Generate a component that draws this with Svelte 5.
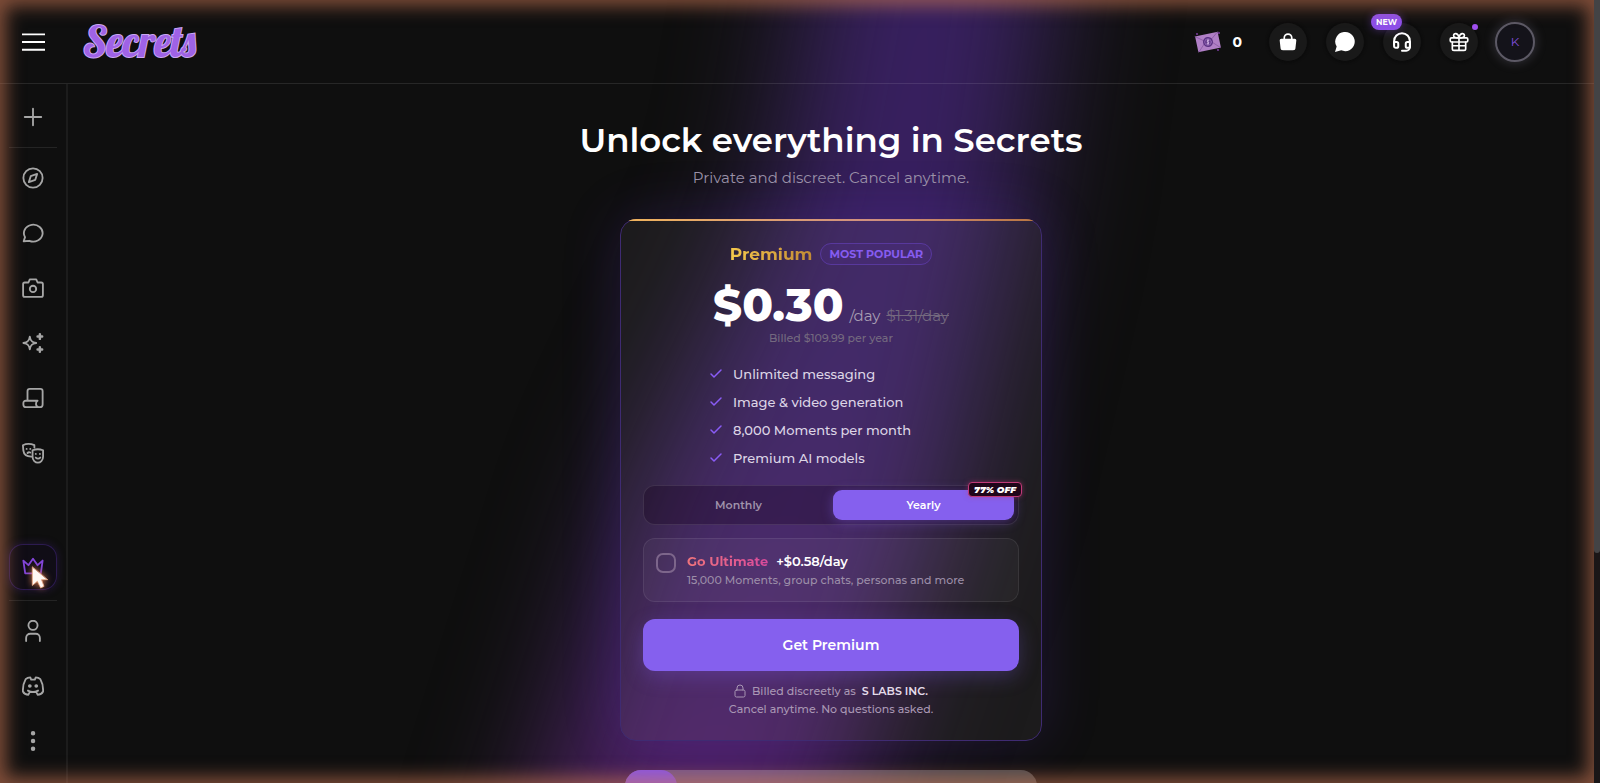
<script lang="ts">
  let billing = $state("yearly");
  let ultimate = $state(false);

  const features = [
    "Unlimited messaging",
    "Image & video generation",
    "8,000 Moments per month",
    "Premium AI models",
  ];

  const links = ["Explore", "Chats", "Gallery", "Create", "Stories", "Characters"];
</script>

{#snippet navIcon(name)}
  <svg class="icon" viewBox="0 0 24 24" aria-hidden="true">
    {#if name === "New"}
      <path d="M12 3v18M3 12h18" />
    {:else if name === "Explore"}
      <circle cx="12" cy="12" r="10.500" />
      <path d="M16.500 7.500 14.500 14l-7 2.500L9.500 10z" />
    {:else if name === "Chats"}
      <path d="M1.800 21 3.300 16.500A10.200 9.200 0 1 1 8 20.500z" />
    {:else if name === "Gallery"}
      <path d="M3 6h4l1.500-3.500h7L17 6h4a1.800 1.800 0 0 1 1.800 1.800v12a1.800 1.800 0 0 1-1.800 1.800H3a1.800 1.800 0 0 1-1.800-1.800v-12A1.800 1.800 0 0 1 3 6z" />
      <circle cx="12" cy="13" r="3.500" />
    {:else if name === "Create"}
      <path d="M8.500 5c.7 4.700 2.300 6.300 7 7-4.700.7-6.300 2.300-7 7-.7-4.700-2.300-6.300-7-7 4.700-.7 6.300-2.300 7-7z" />
      <path d="M19.500 2.500v5M17 5h5M19.500 16.500v5M17 19h5" stroke-width="2.700" />
    {:else if name === "Stories"}
      <path d="M6 14V4.500A2.500 2.500 0 0 1 8.500 2H20a2.500 2.500 0 0 1 2.500 2.500V19a3 3 0 0 1-3 3H4.500a3 3 0 0 1-3-3v-1.500A2.500 2.500 0 0 1 4 15h13c-2.500 1.500-2.500 6 1 7" />
    {:else if name === "Characters"}
      <path d="M10 16c-5 0-8-2.500-8.500-6.500L1 3.500C5 1.500 9 1.500 13.500 3.500V6" />
      <path d="M11.500 9c4-1.500 7.500-1.500 11.500 0v7c0 4-3 6.500-5.700 6.500S11.500 20 11.500 16z" />
      <path d="M5 7.500h.1M9 7.500h.1M6 12c1-1 2-1 3-.5M15 13h.1M19.500 13h.1M15 17c1.500 1.500 3.500 1.500 5 0" />
    {:else if name === "Profile"}
      <circle cx="12" cy="5.800" r="5" />
      <path d="M4.500 23v-3.500A4.500 4.500 0 0 1 9 15h6a4.500 4.500 0 0 1 4.500 4.500V23" />
    {:else if name === "Discord"}
      <path d="M8.500 18.500 7 21.500C4.500 21.500 2 20 1 18 .8 12.500 2 8 4 4.500 5.500 3 7 2.500 9 2.500L10 5h4l1-2.500c2 0 3.500.5 5 2C22 8 23.200 12.500 23 18c-1 2-3.500 3.500-6 3.500l-1.500-3M6.500 17c3.500 2 7.500 2 11 0" />
      <path d="M8.500 12h.1M15.500 12h.1" stroke-width="4" />
    {:else if name === "More"}
      <path d="M12 3.500h.1M12 12h.1M12 20.500h.1" stroke-width="4.800" />
    {:else if name === "Premium"}
      <path d="M1.500 5 7 10l5-7 5 7 5.500-5-2 14h-17z" />
    {/if}
  </svg>
{/snippet}

<div class="app">
  <!-- Slanted light beam behind the whole page -->
  <svg class="beam" viewBox="0 0 1600 783" preserveAspectRatio="none" aria-hidden="true">
    <defs>
      <linearGradient id="beam-fill" x1="0" y1="0" x2="0" y2="1">
        <stop offset="0" stop-color="#37205f" />
        <stop offset="0.5" stop-color="#391f62" />
        <stop offset="0.75" stop-color="#441f62" />
        <stop offset="1" stop-color="#571f62" />
      </linearGradient>
      <filter id="beam-blur" x="-60%" y="-20%" width="220%" height="140%" color-interpolation-filters="sRGB">
        <feGaussianBlur stdDeviation="60" />
      </filter>
    </defs>
    <path d="M850-200h220L1015 200 945 500 780 980H490L640 500 780 200z" fill="url(#beam-fill)" filter="url(#beam-blur)" />
  </svg>

  <header class="topbar">
    <button class="plain burger" aria-label="Toggle menu">
      <svg viewBox="0 0 24 20" aria-hidden="true"><path d="M0 2h24M0 10h24M0 18h24" /></svg>
    </button>
    <a class="logo" href="#home">Secrets</a>

    <div class="actions">
      <a class="balance" href="#moments">
        <svg class="ticket" viewBox="0 0 28 24" aria-hidden="true">
          <g transform="rotate(-12 14 12)">
            <rect x="2.500" y="4" width="23" height="16" rx="1" fill="#b07fc6" />
            <path d="m2.500 4 11.500 9L25.500 4M3 20l7-7m15 7-7-7" fill="none" stroke="#8a5aa5" stroke-width="0.8" />
            <circle cx="14" cy="12" r="5" fill="#5a3182" />
          </g>
          <circle cx="14" cy="12" r="3.300" fill="none" stroke="#9d6fc0" stroke-width="0.8" />
          <path d="M15 10.500c-2-1-3 1-1 1.500s1 2.500-1 1.500M14 9.500v5" fill="none" stroke="#e5c6f4" stroke-width="0.8" />
          <circle cx="3" cy="4" r="1" fill="#7b3d9f" />
          <circle cx="25" cy="3" r="1" fill="#7b3d9f" />
          <circle cx="24" cy="20" r="1" fill="#7b3d9f" />
        </svg>
        0
      </a>
      <button class="plain round" aria-label="Shop">
        <svg viewBox="0 0 24 24" aria-hidden="true">
          <path class="solid" d="M4 8h16a2 2 0 0 1 2 2l-1 9a3 3 0 0 1-3 3H6a3 3 0 0 1-3-3l-1-9a2 2 0 0 1 2-2z" />
          <path d="M7.500 9V7a4.500 4.500 0 0 1 9 0v2" />
        </svg>
      </button>
      <button class="plain round" aria-label="Messages">
        <svg viewBox="0 0 24 24" aria-hidden="true">
          <path class="solid" d="M12.500 0a11.500 11.500 0 1 1-5 22L0 24l2-6.500A11.500 11.500 0 0 1 12.500 0z" />
        </svg>
      </button>
      <button class="plain round" aria-label="Support">
        <svg viewBox="0 0 24 24" aria-hidden="true">
          <path d="M2.500 15v-4a9.500 9.500 0 0 1 19 0v7a4.500 4.500 0 0 1-4.500 4.500H12" stroke-width="2.400" />
          <path d="M2.500 12h3a2 2 0 0 1 2 2v3a2 2 0 0 1-2 2h-1a2 2 0 0 1-2-2zM21.500 12h-3a2 2 0 0 0-2 2v3a2 2 0 0 0 2 2h1a2 2 0 0 0 2-2z" stroke-width="2.400" />
        </svg>
        <span class="new">NEW</span>
      </button>
      <button class="plain round" aria-label="Rewards">
        <svg viewBox="0 0 24 24" aria-hidden="true">
          <rect x="1.500" y="7" width="21" height="5" rx="1.500" />
          <path d="M4 12v8a2 2 0 0 0 2 2h12a2 2 0 0 0 2-2v-8M12 7v15M4 16.500h16M12 7C10 7 5.500 7 5.500 4.200 5.500 1 11 .5 12 7c1-6.500 6.500-6 6.500-2.800C18.500 7 14 7 12 7z" />
        </svg>
        <span class="dot"></span>
      </button>
      <button class="plain avatar" aria-label="Account">K</button>
    </div>
  </header>

  <div class="body">
    <nav class="sidebar" aria-label="Main">
      <a class="nav-item" href="#new" aria-label="New">{@render navIcon("New")}</a>
      <hr />
      <div class="nav-group">
        {#each links as link}
          <a class="nav-item" href="#{link}" aria-label={link}>{@render navIcon(link)}</a>
        {/each}
      </div>
      <a class="nav-item active" href="#premium" aria-label="Premium">
        {@render navIcon("Premium")}
        <svg class="pointer" viewBox="0 0 24 32" aria-hidden="true">
          <path d="M4 3v22l6-5 4 8 4-2-3-8h7z" />
        </svg>
      </a>
      <hr />
      <div class="nav-group last">
        <a class="nav-item" href="#profile" aria-label="Profile">{@render navIcon("Profile")}</a>
        <a class="nav-item" href="#discord" aria-label="Discord">{@render navIcon("Discord")}</a>
        <button class="plain nav-item" aria-label="More">{@render navIcon("More")}</button>
      </div>
    </nav>

    <main>
      <h1>Unlock everything in Secrets</h1>
      <p class="subtitle">Private and discreet. Cancel anytime.</p>

      <section class="card">
        <div class="plan">
          <h2>Premium</h2>
          <span class="popular">MOST POPULAR</span>
        </div>
        <div class="price">
          <strong>$0.30</strong>
          <span>/day</span>
          <s>$1.31/day</s>
        </div>
        <p class="billed">Billed $109.99 per year</p>

        <ul>
          {#each features as feature}
            <li>
              <svg viewBox="0 0 14 12" aria-hidden="true"><path d="m2 6 3 3 7-7" /></svg>
              {feature}
            </li>
          {/each}
        </ul>

        <div class="toggle">
          <button class:selected={billing === "monthly"} onclick={() => (billing = "monthly")}>Monthly</button>
          <button class:selected={billing === "yearly"} onclick={() => (billing = "yearly")}>Yearly</button>
          <span class="discount">77% OFF</span>
        </div>

        <label class="ultimate">
          <input type="checkbox" bind:checked={ultimate} />
          <span>
            <span class="upgrade"><b>Go Ultimate</b> <strong>+$0.58/day</strong></span>
            <span class="detail">15,000 Moments, group chats, personas and more</span>
          </span>
        </label>

        <button class="cta">Get Premium</button>

        <div class="notes">
          <p>
            <svg viewBox="0 0 12 14" aria-hidden="true">
              <rect x="1" y="6" width="10" height="7" rx="1.500" />
              <path d="M3 6V4a3 3 0 0 1 6 0v2" />
            </svg>
            Billed discreetly as <strong>S LABS INC.</strong>
          </p>
          <p>Cancel anytime. No questions asked.</p>
        </div>
      </section>

      <section class="next"><div class="next-tab"></div></section>
    </main>
  </div>

  <div class="vignette"></div>
  <div class="scrollbar"><div class="thumb"></div></div>
</div>

<style>
  :global(body) {
    background: #0f0f0f;
    color: #fff;
    font-family: Montserrat, Inter, sans-serif;
  }

  .app {
    position: relative;
    box-sizing: border-box;
    height: 100vh;
    padding-right: 6px;
    overflow: hidden;
    isolation: isolate;
    display: flex;
    flex-direction: column;
  }

  .beam {
    position: absolute;
    inset: 0;
    z-index: -1;
    width: 100%;
    height: 100%;
  }

  h1, h2, p, ul {
    margin: 0;
    padding: 0;
  }

  a {
    color: inherit;
    text-decoration: none;
  }

  button {
    font: inherit;
    color: inherit;
    border: none;
    cursor: pointer;
  }

  svg {
    display: block;
    flex: none;
    fill: none;
    stroke: currentColor;
    stroke-width: 2;
    stroke-linecap: round;
    stroke-linejoin: round;
  }

  .plain {
    background: none;
    padding: 0;
  }

  /* Top bar */
  .topbar {
    display: flex;
    align-items: center;
    height: 83px;
    flex: none;
    padding: 0 59px 0 22px;
    border-bottom: 1px solid #ffffff1a;
  }

  .burger svg {
    width: 23px;
    height: 20px;
    stroke-linecap: butt;
  }

  .logo {
    margin-left: 38px;
    font-family: Lobster, Pacifico, "Liberation Serif", serif;
    font-size: 42px;
    line-height: 44px;
    font-weight: 400;
    color: #9f62e6;
    -webkit-text-stroke: 2px #cba8f2;
    paint-order: stroke fill;
  }

  .actions {
    display: flex;
    align-items: center;
    gap: 19px;
    margin-left: auto;
  }

  .balance {
    display: flex;
    align-items: center;
    gap: 10px;
    margin-right: 8px;
    font-size: 14px;
    font-weight: 700;
  }

  .ticket {
    width: 28px;
    height: 24px;
    stroke-width: 1;
    stroke: none;
  }

  .round {
    position: relative;
    display: grid;
    place-items: center;
    width: 38px;
    height: 38px;
    border-radius: 50%;
    background: #191919;
    box-shadow: 0 0 2px 2px #0c0c0c;
  }

  .round svg {
    width: 20px;
    height: 20px;
  }

  .solid {
    fill: currentColor;
    stroke: none;
  }

  .new {
    position: absolute;
    top: -9px;
    right: 19px;
    padding: 0 5px;
    border-radius: 8px;
    background: #8d4fe8;
    box-shadow: 0 0 8px #8d4fe866;
    font-size: 8px;
    line-height: 16px;
    font-weight: 700;
  }

  .dot {
    position: absolute;
    top: 1px;
    right: 0;
    width: 6px;
    height: 6px;
    border-radius: 50%;
    background: #a050f0;
  }

  .avatar {
    box-sizing: border-box;
    width: 40px;
    height: 40px;
    margin-left: -2px;
    border: 2px solid #5c5965;
    border-radius: 50%;
    background: #14131a;
    box-shadow: 0 0 12px #8a85a055;
    color: #8250df;
    font-size: 12px;
  }

  /* Sidebar */
  .body {
    display: flex;
    flex: 1;
    min-height: 0;
  }

  .sidebar {
    display: flex;
    flex-direction: column;
    align-items: center;
    box-sizing: border-box;
    flex: 0 0 68px;
    padding: 10px 0 19px;
    border-right: 2px solid #1c1c1c;
  }

  .sidebar hr {
    width: 48px;
    height: 1px;
    margin: 7px 0;
    border: none;
    background: #242424;
  }

  .nav-group {
    display: flex;
    flex: 1;
    flex-direction: column;
    gap: 9px;
  }

  .last {
    flex: none;
  }

  .nav-item {
    position: relative;
    display: grid;
    place-items: center;
    width: 48px;
    height: 46px;
    color: #a6a6a6;
  }

  .icon {
    width: 22px;
    height: 22px;
  }

  .active {
    margin-bottom: 3px;
    border-radius: 14px;
    background: #100d16;
    box-shadow: inset 0 0 0 1px #2c1b50, 0 0 8px #43248066;
    color: #8245d8;
  }

  .pointer {
    position: absolute;
    top: 20px;
    left: 20px;
    width: 20px;
    height: 28px;
    fill: #fff8f3;
    stroke: #e9a987;
    stroke-width: 1;
    filter: drop-shadow(0 0 3px #d8784a);
  }

  /* Pricing */
  main {
    display: flex;
    flex: 1;
    flex-direction: column;
    align-items: center;
    padding-top: 34px;
    overflow: hidden;
  }

  h1 {
    font-size: 34px;
    line-height: 44px;
    font-weight: 600;
  }

  .subtitle {
    margin-top: 4px;
    color: #9c93a8;
    font-size: 15px;
    line-height: 24px;
  }

  .card {
    position: relative;
    box-sizing: border-box;
    flex: none;
    width: 422px;
    margin-top: 29px;
    padding: 23px 22px 22px;
    border: 1px solid #3f2b72;
    border-radius: 16px;
    background: rgba(255, 245, 255, 0.055);
    box-shadow: 0 0 60px rgba(110, 60, 230, 0.18);
  }

  .card::before {
    content: "";
    position: absolute;
    inset: -1px;
    border-radius: 16px;
    background: linear-gradient(90deg, #f0b45c, #cf8f80 60%, #b9753f) top / 100% 2px no-repeat;
    pointer-events: none;
  }

  .plan {
    display: flex;
    align-items: center;
    justify-content: center;
    gap: 8px;
  }

  h2 {
    background: linear-gradient(90deg, #f4c84c, #c28a35);
    background-clip: text;
    color: transparent;
    font-size: 17px;
    line-height: 22px;
    font-weight: 700;
  }

  .popular {
    padding: 0 8px;
    border: 1px solid #58389d;
    border-radius: 11px;
    background: #4a2c8066;
    color: #865cf0;
    font-size: 11px;
    line-height: 20px;
    font-weight: 700;
  }

  .price {
    display: flex;
    align-items: baseline;
    justify-content: center;
    gap: 6px;
    margin-top: 12px;
    color: #a79db3;
    font-size: 15px;
    line-height: 20px;
  }

  .price strong {
    color: #fff;
    font-size: 45px;
    line-height: 56px;
    font-weight: 800;
  }

  .price s {
    color: #74697f;
  }

  .billed {
    margin-top: -4px;
    color: #74697f;
    text-align: center;
    font-size: 11px;
    line-height: 18px;
    font-weight: 500;
  }

  ul {
    display: grid;
    gap: 8px;
    margin: 17px 66px 0;
    list-style: none;
  }

  li {
    display: flex;
    align-items: center;
    gap: 10px;
    color: #ddd5e6;
    font-size: 13px;
    line-height: 20px;
    font-weight: 500;
  }

  li svg {
    width: 14px;
    height: 12px;
    color: #8a5cf6;
    stroke-width: 1.5;
  }

  .toggle {
    position: relative;
    display: grid;
    grid-template-columns: 1fr 1fr;
    gap: 4px;
    margin-top: 17px;
    padding: 4px;
    border: 1px solid #ffffff1a;
    border-radius: 12px;
    background: rgba(20, 0, 25, 0.3);
  }

  .toggle button {
    border-radius: 9px;
    background: none;
    color: #a093ab;
    font-size: 11px;
    line-height: 28px;
    font-weight: 600;
  }

  .toggle .selected {
    background: #8560ee;
    box-shadow: 0 2px 12px #8560ee66;
    color: #fff;
  }

  .discount {
    position: absolute;
    top: -4px;
    right: -4px;
    padding: 0 5px;
    border: 1px solid #c03a78;
    border-radius: 4px;
    background: #20061a;
    box-shadow: 0 0 5px #c03a7880;
    font-size: 9px;
    line-height: 13px;
    font-weight: 900;
    font-style: italic;
  }

  .ultimate {
    display: flex;
    align-items: flex-start;
    gap: 11px;
    margin-top: 13px;
    padding: 12px;
    border: 1px solid #ffffff14;
    border-radius: 12px;
    background: rgba(255, 255, 255, 0.04);
    cursor: pointer;
  }

  .ultimate input {
    appearance: none;
    box-sizing: border-box;
    width: 20px;
    height: 20px;
    margin: 2px 0 0;
    border: 2px solid #7d668b;
    border-radius: 7px;
  }

  .ultimate input:checked {
    background: #8560ee;
  }

  .upgrade {
    display: flex;
    gap: 8px;
    font-size: 13px;
    line-height: 20px;
    font-weight: 600;
  }

  .upgrade b {
    background: linear-gradient(90deg, #f0747c, #d94a9c);
    background-clip: text;
    color: transparent;
    font-weight: 700;
  }

  .upgrade strong {
    font-weight: 600;
  }

  .detail {
    display: block;
    color: #9c8ea8;
    font-size: 11px;
    line-height: 18px;
    font-weight: 500;
  }

  .cta {
    width: 100%;
    height: 52px;
    margin-top: 17px;
    border-radius: 12px;
    background: #8560ee;
    box-shadow: 0 6px 20px #8560ee44;
    font-size: 14px;
    font-weight: 600;
  }

  .notes {
    margin-top: 11px;
    color: #a997b4;
    font-size: 11px;
    line-height: 18px;
    font-weight: 500;
    text-align: center;
  }

  .notes p {
    display: flex;
    align-items: center;
    justify-content: center;
    gap: 6px;
  }

  .notes svg {
    width: 12px;
    height: 14px;
    stroke-width: 1;
  }

  .notes strong {
    color: #e4dcea;
    font-weight: 600;
  }

  .next {
    flex: none;
    width: 412px;
    height: 60px;
    margin-top: 29px;
    overflow: hidden;
    border-radius: 16px;
    background: rgba(255, 255, 255, 0.25);
  }

  .next-tab {
    width: 52px;
    height: 60px;
    border-radius: 0 16px 16px 0;
    background: #8a55e6;
  }

  /* Warm glow round the window edge */
  .vignette {
    position: absolute;
    inset: 0 6px 0 0;
    box-shadow: inset 0 0 18px 6px rgba(200, 118, 84, 0.62);
    pointer-events: none;
  }

  .scrollbar {
    position: absolute;
    inset: 0 0 0 auto;
    width: 6px;
    background: #1a1617;
  }

  .thumb {
    height: 553px;
    border-radius: 0 0 3px 3px;
    background: #434345;
  }
</style>
